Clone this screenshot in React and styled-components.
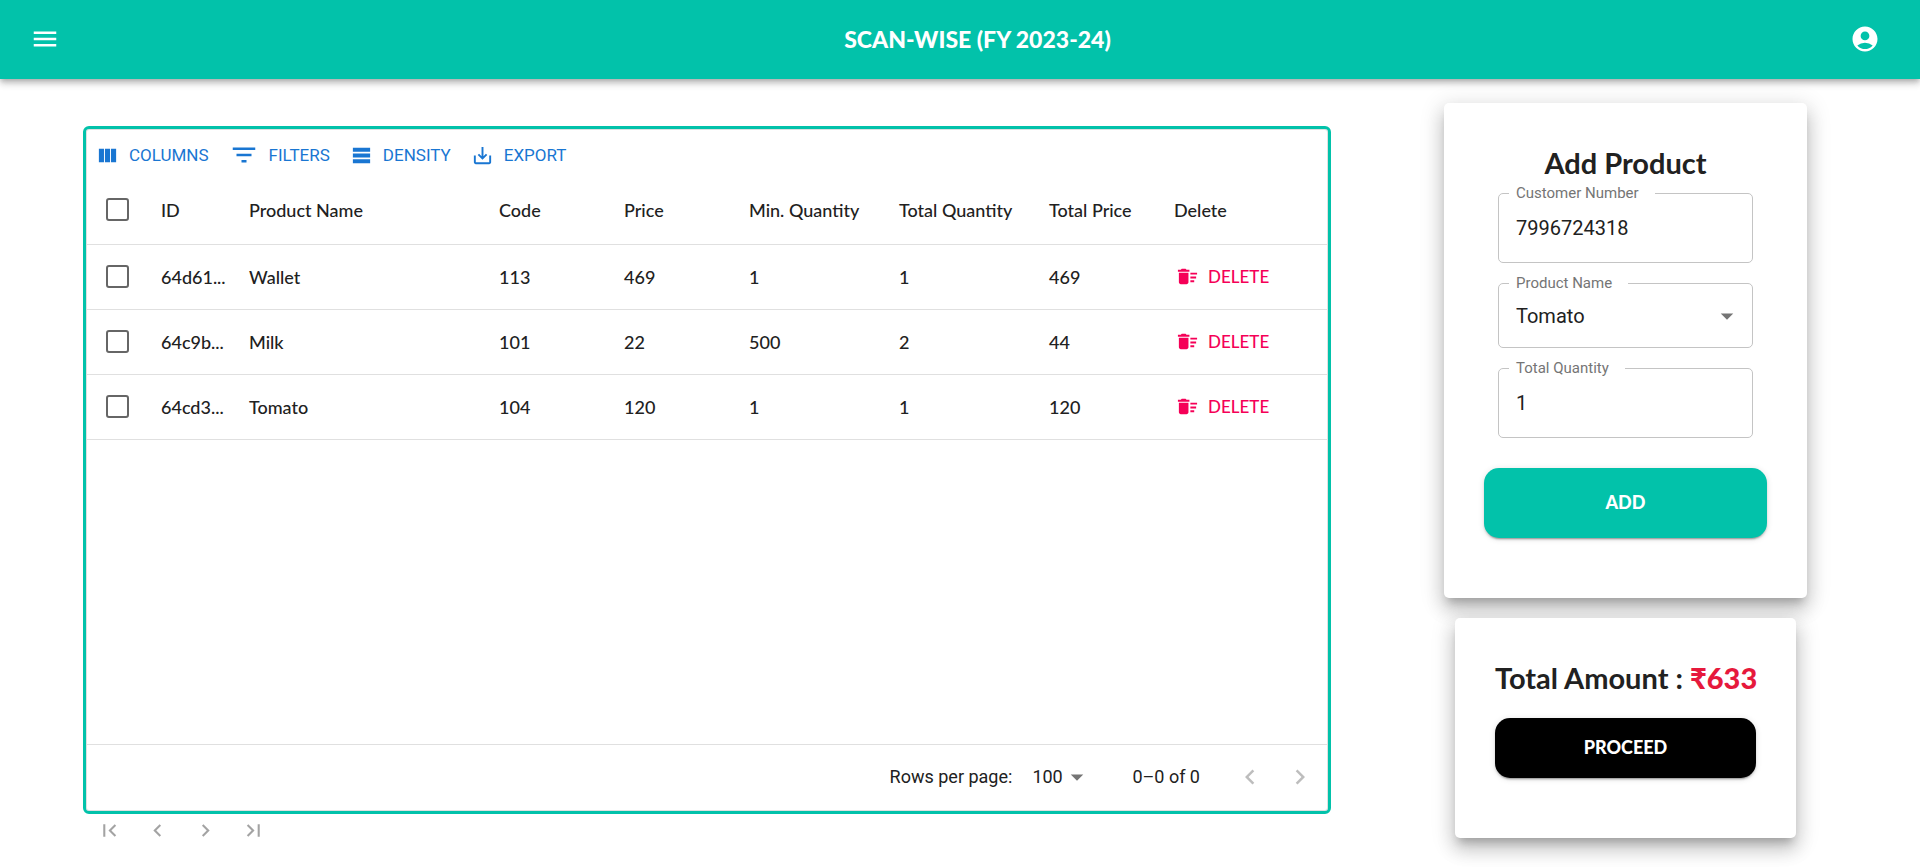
import React from "react";
import styled, { createGlobalStyle } from "styled-components";
import {
  MdMenu,
  MdAccountCircle,
  MdFilterList,
  MdDeleteSweep,
  MdArrowDropDown,
  MdChevronLeft,
  MdChevronRight,
  MdFirstPage,
  MdLastPage,
} from "react-icons/md";

const teal = "#02c2aa";
const ink = "#212121";
const display = `Lato, "Open Sans", sans-serif`;
const body = `Roboto, "Liberation Sans", sans-serif`;

const GlobalStyle = createGlobalStyle`
  *, *::before, *::after { box-sizing: border-box; }
  body { margin: 0; background: #fff; color: ${ink}; font-family: ${body}; }
  button, input, select { font: inherit; color: inherit; }
  button { border: 0; background: none; padding: 0; cursor: pointer; }
  svg { display: block; flex: none; }
`;

const AppBar = styled.header`
  position: relative;
  display: flex;
  align-items: center;
  height: 79px;
  padding: 0 40px 2px 30px;
  background: ${teal};
  color: #fff;
  box-shadow: 0 2px 5px -1px rgba(0, 0, 0, 0.2), 0 5px 6px rgba(0, 0, 0, 0.14),
    0 1px 12px rgba(0, 0, 0, 0.12);
`;

const AppTitle = styled.h1`
  flex: 1;
  margin: 0 0 0 45px;
  font: 900 23px/32px ${display};
  text-align: center;
`;

const Main = styled.main`
  display: flex;
  align-items: flex-start;
  padding: 24px 0 28px 83px;
`;

const GridSection = styled.section`
  width: 65vw;
  padding-top: 23px;
`;

const GridFrame = styled.div`
  display: flex;
  flex-direction: column;
  min-height: 688px;
  padding: 1px;
  border: 3px solid ${teal};
  border-radius: 6px;
  box-shadow: inset 0 0 0 1px #e0e0e0;
`;

const Toolbar = styled.div`
  display: flex;
  align-items: center;
  gap: 10px;
  height: 46px;
  padding: 4px 4px 0;
`;

const ToolButton = styled.button`
  display: flex;
  align-items: center;
  gap: 10px;
  padding: 4px 5px;
  color: #1976d2;
  font-size: 17px;
  line-height: 28px;
  text-transform: uppercase;
`;

const Table = styled.table`
  width: 100%;
  table-layout: fixed;
  border-collapse: collapse;
  text-align: left;
  font: 500 18px/24px ${display};
`;

const Row = styled.tr`
  height: ${(p) => (p.$head ? 68 : 65)}px;
  border-bottom: 1px solid #e0e0e0;
`;

const cell = `
  padding: 0 4px 0 12px;
  overflow: hidden;
  white-space: nowrap;
  text-overflow: ellipsis;
`;

const HeadCell = styled.th`
  ${cell}
  font-weight: 500;
`;

const Cell = styled.td`
  ${cell}
`;

const Checkbox = styled.input.attrs({ type: "checkbox" })`
  appearance: none;
  display: block;
  width: 23px;
  height: 23px;
  margin: 0 7px;
  border: 2px solid #666;
  border-radius: 3px;
  &:checked { background: ${teal}; }
`;

const DeleteButton = styled.button`
  display: flex;
  align-items: center;
  gap: 9px;
  padding: 4px 2px;
  color: #f50057;
  font-weight: 500;
  font-size: 17px;
`;

const GridFooter = styled.div`
  display: flex;
  align-items: center;
  justify-content: flex-end;
  height: 66px;
  margin-top: auto;
  padding: 0 2px 2px 0;
  border-top: 1px solid #e0e0e0;
  font-size: 18px;
`;

const PageSize = styled.label`
  display: flex;
  align-items: center;
  gap: 20px;
`;

const SelectBox = styled.span`
  display: grid;
  align-items: center;
  > * { grid-area: 1 / 1; }
  > svg { justify-self: end; color: #757575; pointer-events: none; }
`;

const PageSelect = styled.select`
  appearance: none;
  width: 60px;
  padding: 0;
  border: 0;
  background: none;
`;

const RangeText = styled.span`
  margin: 0 25px 0 40px;
`;

const PageButton = styled.button`
  display: grid;
  place-items: center;
  width: ${(p) => p.$size}px;
  height: ${(p) => p.$size}px;
  color: rgba(0, 0, 0, ${(p) => p.$alpha});
`;

const Pager = styled.nav`
  display: flex;
  height: 32px;
  align-items: center;
  padding-left: 2px;
`;

const Side = styled.aside`
  flex: 1;
  display: flex;
  flex-direction: column;
  align-items: center;
  gap: 20px;
`;

const Card = styled.section`
  display: flex;
  flex-direction: column;
  width: ${(p) => p.$width}px;
  padding: 40px 40px 60px;
  border-radius: 5px;
  background: #fff;
  box-shadow: 0 8px 8px -4px rgba(0, 0, 0, 0.2), 0 12px 18px 1px rgba(0, 0, 0, 0.14),
    0 5px 22px 4px rgba(0, 0, 0, 0.12);
`;

const CardTitle = styled.h2`
  margin: 0 0 ${(p) => p.$gap}px;
  font: 700 29px/40px ${display};
  text-align: center;
  white-space: nowrap;
`;

const Amount = styled.span`
  color: #e6193c;
  font-weight: 900;
`;

const Fields = styled.div`
  display: flex;
  flex-direction: column;
  gap: 20px;
  padding: 0 14px 30px;
`;

const Field = styled.div`
  position: relative;
  display: grid;
  align-items: center;
  height: ${(p) => p.$height}px;
  border: 1px solid #c4c4c4;
  border-radius: 5px;
  font-size: 20px;
  > input, > select, > svg { grid-area: 1 / 1; }
  > svg { justify-self: end; margin-right: 10px; color: #757575; pointer-events: none; }
`;

const FieldLabel = styled.label`
  position: absolute;
  top: -11px;
  left: 10px;
  padding: 0 16px 0 7px;
  background: #fff;
  color: #757575;
  font-size: 15px;
  line-height: 20px;
`;

const TextInput = styled.input`
  appearance: none;
  width: 100%;
  height: 100%;
  padding: 0 17px;
  border: 0;
  background: none;
  outline: 0;
`;

const FieldSelect = styled(TextInput).attrs({ as: "select" })``;

const ActionButton = styled.button`
  height: ${(p) => p.$height}px;
  padding-bottom: 2px;
  border-radius: 15px;
  background: ${(p) => p.$color};
  color: #fff;
  font: 900 18px/24px ${display};
  box-shadow: 0 3px 1px -2px rgba(0, 0, 0, 0.2), 0 2px 2px rgba(0, 0, 0, 0.14),
    0 1px 6px rgba(0, 0, 0, 0.12);
`;

const Glyph = ({ d, size = 23 }) => (
  <svg width={size} height={size} viewBox="0 0 24 24" fill="currentColor" aria-hidden="true">
    <path d={d} />
  </svg>
);

const tools = [
  {
    label: "Columns",
    icon: <Glyph d="M14.67 5v14H9.33V5h5.34zm1 14H21V5h-5.33v14zm-7.34 0V5H3v14h5.33z" />,
  },
  { label: "Filters", icon: <MdFilterList size={30} /> },
  {
    label: "Density",
    icon: <Glyph d="M21 8H3V4h18v4zm0 2H3v4h18v-4zm0 6H3v4h18v-4z" />,
  },
  {
    label: "Export",
    icon: (
      <Glyph d="M19 12v7H5v-7H3v7c0 1.1.9 2 2 2h14c1.1 0 2-.9 2-2v-7h-2zm-6 .67l2.59-2.58L17 11.5l-5 5-5-5 1.41-1.41L11 12.67V3h2z" />
    ),
  },
];

const columns = [
  ["ID", 88],
  ["Product Name", 250],
  ["Code", 125],
  ["Price", 125],
  ["Min. Quantity", 150],
  ["Total Quantity", 150],
  ["Total Price", 125],
  ["Delete", 165],
];

const rows = [
  ["64d61...", "Wallet", 113, 469, 1, 1, 469],
  ["64c9b...", "Milk", 101, 22, 500, 2, 44],
  ["64cd3...", "Tomato", 104, 120, 1, 1, 120],
];

const pagerIcons = [
  ["First page", MdFirstPage],
  ["Previous page", MdChevronLeft],
  ["Next page", MdChevronRight],
  ["Last page", MdLastPage],
];

export default function App() {
  return (
    <>
      <GlobalStyle />
      <AppBar>
        <button aria-label="Menu">
          <MdMenu size={30} />
        </button>
        <AppTitle>SCAN-WISE (FY 2023-24)</AppTitle>
        <button aria-label="Account">
          <MdAccountCircle size={30} />
        </button>
      </AppBar>
      <Main>
        <GridSection>
          <GridFrame>
            <Toolbar>
              {tools.map((t) => (
                <ToolButton key={t.label}>
                  {t.icon}
                  {t.label}
                </ToolButton>
              ))}
            </Toolbar>
            <Table>
              <colgroup>
                <col width={62} />
                {columns.map(([name, width]) => (
                  <col key={name} width={width} />
                ))}
              </colgroup>
              <thead>
                <Row $head>
                  <HeadCell>
                    <Checkbox aria-label="Select all rows" />
                  </HeadCell>
                  {columns.map(([name]) => (
                    <HeadCell key={name}>{name}</HeadCell>
                  ))}
                </Row>
              </thead>
              <tbody>
                {rows.map((row) => (
                  <Row key={row[0]}>
                    <Cell>
                      <Checkbox aria-label={`Select ${row[1]}`} />
                    </Cell>
                    {row.map((value, i) => (
                      <Cell key={i}>{value}</Cell>
                    ))}
                    <Cell>
                      <DeleteButton>
                        <MdDeleteSweep size={23} />
                        DELETE
                      </DeleteButton>
                    </Cell>
                  </Row>
                ))}
              </tbody>
            </Table>
            <GridFooter>
              <PageSize>
                Rows per page:
                <SelectBox>
                  <PageSelect defaultValue="100">
                    <option>100</option>
                  </PageSelect>
                  <MdArrowDropDown size={30} />
                </SelectBox>
              </PageSize>
              <RangeText>0–0 of 0</RangeText>
              <PageButton $size={50} $alpha={0.26} aria-label="Previous rows">
                <MdChevronLeft size={30} />
              </PageButton>
              <PageButton $size={50} $alpha={0.26} aria-label="Next rows">
                <MdChevronRight size={30} />
              </PageButton>
            </GridFooter>
          </GridFrame>
          <Pager aria-label="Pages">
            {pagerIcons.map(([label, Icon]) => (
              <PageButton key={label} $size={48} $alpha={0.36} aria-label={label}>
                <Icon size={25} />
              </PageButton>
            ))}
          </Pager>
        </GridSection>
        <Side>
          <Card $width={363}>
            <CardTitle $gap={10}>Add Product</CardTitle>
            <Fields>
              <Field $height={70}>
                <FieldLabel htmlFor="customer">Customer Number</FieldLabel>
                <TextInput id="customer" defaultValue="7996724318" />
              </Field>
              <Field $height={65}>
                <FieldLabel htmlFor="product">Product Name</FieldLabel>
                <FieldSelect id="product" defaultValue="Tomato">
                  <option>Tomato</option>
                </FieldSelect>
                <MdArrowDropDown size={30} />
              </Field>
              <Field $height={70}>
                <FieldLabel htmlFor="quantity">Total Quantity</FieldLabel>
                <TextInput id="quantity" defaultValue="1" />
              </Field>
            </Fields>
            <ActionButton $height={70} $color={teal}>
              ADD
            </ActionButton>
          </Card>
          <Card $width={341}>
            <CardTitle $gap={20}>
              Total Amount : <Amount>₹633</Amount>
            </CardTitle>
            <ActionButton $height={60} $color="#000">
              PROCEED
            </ActionButton>
          </Card>
        </Side>
      </Main>
    </>
  );
}
